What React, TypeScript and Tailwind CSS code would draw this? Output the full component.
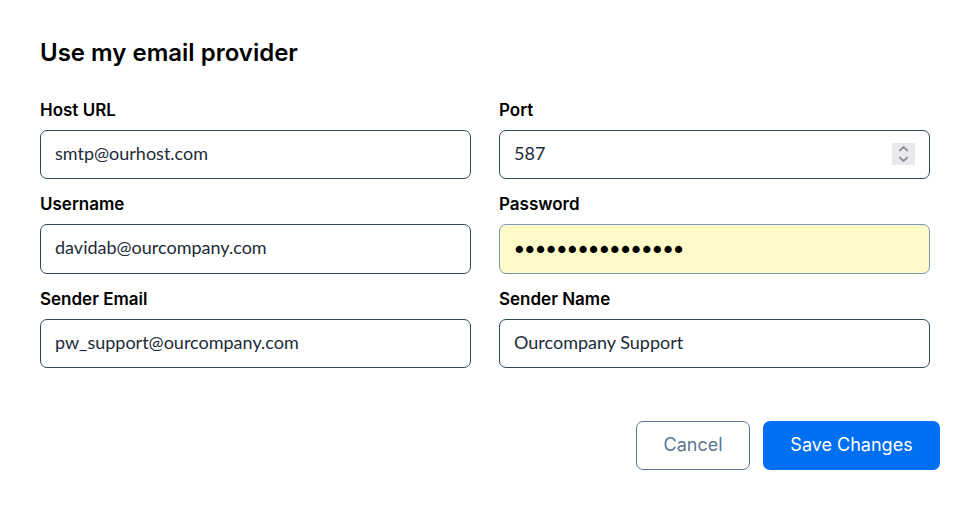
import { useRef } from "react";
import type { ComponentProps, ReactNode } from "react";
import { clsx } from "clsx";

const inputBase =
  "block w-full grow rounded-[7px] border px-[14px] text-lg leading-6 outline-none focus:ring-2 focus:ring-[#006ff2]/30";

const plainColors =
  "min-h-[49px] border-[#33475b] bg-white pb-1 font-['Lato','Liberation_Sans',sans-serif] text-[#1c2b39]";

function Field({ id, label, children }: { id: string; label: string; children: ReactNode }) {
  return (
    <div className="flex flex-col">
      <label htmlFor={id} className="mb-2 block text-[17px] leading-6 font-semibold text-black">
        {label}
      </label>
      {children}
    </div>
  );
}

function TextInput({ className, ...props }: ComponentProps<"input">) {
  return <input {...props} name={props.id} className={clsx(inputBase, className ?? plainColors)} />;
}

function PortInput({ id }: { id: string }) {
  const ref = useRef<HTMLInputElement>(null);
  return (
    <div className="relative">
      <input
        ref={ref}
        id={id}
        name={id}
        type="number"
        defaultValue={587}
        className={clsx(
          inputBase,
          plainColors,
          "[appearance:textfield] [&::-webkit-inner-spin-button]:appearance-none",
        )}
      />
      <div className="absolute top-[13px] right-[15px] flex h-[22px] w-[23px] flex-col bg-[#e9e9ed] text-[#8f8f9d]">
        <button
          type="button"
          aria-label="Increase port"
          onClick={() => ref.current?.stepUp()}
          className="flex flex-1 items-center justify-center"
        >
          <svg width="11" height="7" viewBox="0 0 11 7" fill="none" stroke="currentColor" strokeWidth="1.8">
            <path d="M1.8 5.5 5.5 2 9.2 5.5" strokeLinecap="round" strokeLinejoin="round" />
          </svg>
        </button>
        <button
          type="button"
          aria-label="Decrease port"
          onClick={() => ref.current?.stepDown()}
          className="flex flex-1 items-center justify-center"
        >
          <svg width="11" height="7" viewBox="0 0 11 7" fill="none" stroke="currentColor" strokeWidth="1.8">
            <path d="M1.8 1.5 5.5 5 9.2 1.5" strokeLinecap="round" strokeLinejoin="round" />
          </svg>
        </button>
      </div>
    </div>
  );
}

export default function App() {
  return (
    <main className="bg-white px-10 pt-[37px] pb-11 font-['Inter','Liberation_Sans',sans-serif]">
      <h1 className="text-2xl font-semibold text-black">Use my email provider</h1>
      <form onSubmit={(e) => e.preventDefault()}>
        <div className="mt-[29px] mr-[10px] grid grid-cols-2 gap-x-7 gap-y-[13px]">
          <Field id="host" label="Host URL">
            <TextInput id="host" type="text" defaultValue="smtp@ourhost.com" />
          </Field>
          <Field id="port" label="Port">
            <PortInput id="port" />
          </Field>
          <Field id="username" label="Username">
            <TextInput id="username" type="text" defaultValue="davidab@ourcompany.com" />
          </Field>
          <Field id="password" label="Password">
            <TextInput
              id="password"
              type="password"
              defaultValue="ourcompany-smtp1"
              className="min-h-[50px] border-[#7c98b6] bg-[#fffbc8] pt-[2px] font-['DejaVu_Sans',sans-serif] text-black [-webkit-text-stroke:2px_black]"
            />
          </Field>
          <Field id="sender-email" label="Sender Email">
            <TextInput id="sender-email" type="email" defaultValue="pw_support@ourcompany.com" />
          </Field>
          <Field id="sender-name" label="Sender Name">
            <TextInput id="sender-name" type="text" defaultValue="Ourcompany Support" />
          </Field>
        </div>
        <div className="mt-[53px] flex justify-end gap-[13px]">
          <button
            type="button"
            className="h-[49px] min-w-[114px] rounded-[7px] border border-[#5b7591] px-6 pb-[2px] text-lg text-[#5b7591]"
          >
            Cancel
          </button>
          <button
            type="submit"
            className="h-[49px] min-w-[177px] rounded-[7px] bg-[#006ff2] px-6 pb-[2px] text-lg text-white"
          >
            Save Changes
          </button>
        </div>
      </form>
    </main>
  );
}
